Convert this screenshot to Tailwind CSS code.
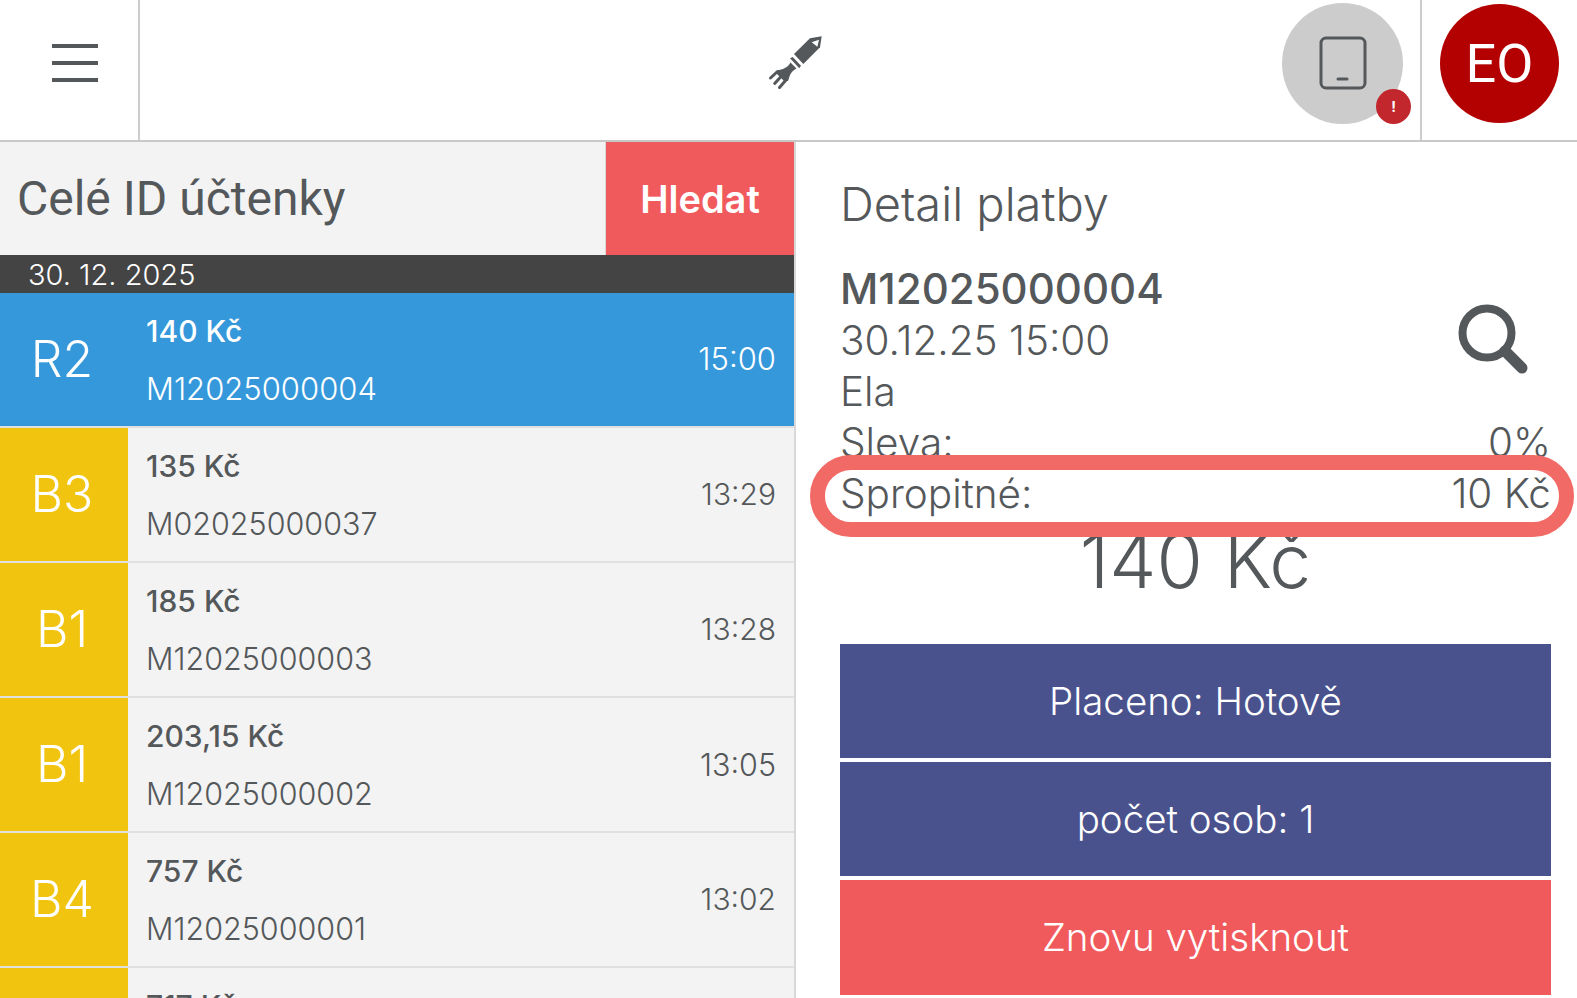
<!doctype html>
<html lang="cs">
  <head>
    <meta charset="UTF-8" />
    <title>Detail platby</title>
    <script src="https://cdn.jsdelivr.net/npm/@tailwindcss/browser@4"></script>
  </head>
  <body class="h-screen overflow-hidden bg-white text-[#54585a] font-['Inter',sans-serif]">
    <header class="flex h-[142px] items-stretch border-b-2 border-[#c8c8c8] bg-white">
      <div class="flex w-[140px] shrink-0 items-center justify-center border-r-2 border-[#cccccc] pl-[12px]">
        <div class="flex w-[46px] flex-col gap-[13px] -mt-[15px]">
          <span class="h-[4px] bg-[#54585a]"></span>
          <span class="h-[4px] bg-[#54585a]"></span>
          <span class="h-[4px] bg-[#54585a]"></span>
        </div>
      </div>
      <div class="flex w-[1125px] items-center justify-center pl-[187px]">
        <svg class="-mt-[15px]" width="56" height="56" viewBox="0 0 56 56" fill="#54585a" stroke-linecap="round">
          <path d="M26 19 L42 3.3 L53.7 1.3 L52 12.3 L35.3 29 Z" />
          <path d="M43.7 7.3 L51 4.7 L49.3 11.7 Z" fill="#fff" />
          <path d="M22 23.3 L24.7 22 L33 30.7 L31.3 33.3 Z" />
          <path d="M22.5 27.5 L28.5 33.5 Q24 35.5 22 40 L20 46 L16 46 L8 38 L9 35.5 L15 34 Q20 32 22.5 27.5 Z" />
          <path d="M9.5 36.5 L2.5 43 M13.5 41 L6.7 48.5 M18 45 L11.5 52.5" stroke="#54585a" stroke-width="3" fill="none" />
        </svg>
      </div>
      <div class="flex w-[157px] items-center justify-center border-r-2 border-[#cccccc]">
        <div class="relative flex h-[121px] w-[121px] -mt-[14px] items-center justify-center rounded-full bg-[#cccccc]">
          <svg width="48" height="54" viewBox="0 0 48 54" fill="none" stroke="#54585a" stroke-width="3">
            <rect x="2" y="2" width="44" height="50" rx="5" />
            <path d="M19 43 H28" stroke-width="3" stroke-linecap="round" />
          </svg>
          <span class="absolute right-[-8px] bottom-0 flex h-[35px] w-[35px] items-center justify-center rounded-full bg-[#c1272d] text-[14px] font-bold text-white">!</span>
        </div>
      </div>
      <div class="flex flex-1 items-center justify-center">
        <div class="flex h-[119px] w-[119px] -mt-[14px] items-center justify-center rounded-full bg-[#b30000] text-[54px] text-white font-['Roboto',sans-serif]">EO</div>
      </div>
    </header>

    <main class="flex">
      <section class="w-[796px] shrink-0 border-r-2 border-[#d8d8d8]">
        <div class="flex h-[113px] bg-[#f3f3f3]">
          <div class="flex flex-1 items-center pl-[17px] pt-[1px] text-[48px] font-['Roboto',sans-serif]">Celé ID účtenky</div>
          <div class="flex w-[189px] items-center justify-center border-l border-[#d8d8d8] bg-[#f15a5c] pt-[1px] text-[38px] font-semibold text-white">Hledat</div>
        </div>
        <div class="h-[38px] bg-[#444444] pl-[28px] pt-[1px] text-[29px] leading-[38px] font-light text-white">30. 12. 2025</div>

        <div class="flex h-[133px] bg-[#3598db] text-white">
          <div class="flex w-[124px] items-center justify-center text-[50px] font-[350]">R2</div>
          <div class="flex flex-1 flex-col pl-[22px] pt-[16px]">
            <span class="text-[30px] font-medium">140 Kč</span>
            <span class="mt-[12px] text-[31px] font-[350]">M12025000004</span>
          </div>
          <div class="flex items-center pr-[18px] text-[31px] font-[350]">15:00</div>
        </div>

        <div class="flex h-[135px] border-t-2 border-[#e0e0e0] bg-[#f3f3f3]">
          <div class="flex w-[128px] items-center justify-center bg-[#f1c40f] pr-[4px] text-[50px] font-[350] text-white">B3</div>
          <div class="flex flex-1 flex-col pl-[18px] pt-[16px]">
            <span class="text-[30px] font-medium">135 Kč</span>
            <span class="mt-[12px] text-[30.5px] font-[350]">M02025000037</span>
          </div>
          <div class="flex items-center pr-[18px] text-[30px] font-[350]">13:29</div>
        </div>

        <div class="flex h-[135px] border-t-2 border-[#e0e0e0] bg-[#f3f3f3]">
          <div class="flex w-[128px] items-center justify-center bg-[#f1c40f] pr-[4px] text-[50px] font-[350] text-white">B1</div>
          <div class="flex flex-1 flex-col pl-[18px] pt-[16px]">
            <span class="text-[30px] font-medium">185 Kč</span>
            <span class="mt-[12px] text-[30.5px] font-[350]">M12025000003</span>
          </div>
          <div class="flex items-center pr-[18px] text-[30px] font-[350]">13:28</div>
        </div>

        <div class="flex h-[135px] border-t-2 border-[#e0e0e0] bg-[#f3f3f3]">
          <div class="flex w-[128px] items-center justify-center bg-[#f1c40f] pr-[4px] text-[50px] font-[350] text-white">B1</div>
          <div class="flex flex-1 flex-col pl-[18px] pt-[16px]">
            <span class="text-[30px] font-medium">203,15 Kč</span>
            <span class="mt-[12px] text-[30.5px] font-[350]">M12025000002</span>
          </div>
          <div class="flex items-center pr-[18px] text-[30.5px] font-[350]">13:05</div>
        </div>

        <div class="flex h-[135px] border-t-2 border-[#e0e0e0] bg-[#f3f3f3]">
          <div class="flex w-[128px] items-center justify-center bg-[#f1c40f] pr-[4px] text-[50px] font-[350] text-white">B4</div>
          <div class="flex flex-1 flex-col pl-[18px] pt-[16px]">
            <span class="text-[30px] font-medium">757 Kč</span>
            <span class="mt-[12px] text-[30.5px] font-[350]">M12025000001</span>
          </div>
          <div class="flex items-center pr-[18px] text-[30px] font-[350]">13:02</div>
        </div>

        <div class="flex h-[135px] border-t-2 border-[#e0e0e0] bg-[#f3f3f3]">
          <div class="flex w-[128px] items-center justify-center bg-[#f1c40f]"></div>
          <div class="flex flex-1 flex-col pl-[18px] pt-[16px]">
            <span class="text-[30px] font-medium">717 Kč</span>
          </div>
        </div>
      </section>

      <section class="relative flex-1 pl-[44px] pr-[26px]">
        <h2 class="pt-[34px] text-[47px] leading-[56px] font-light">Detail platby</h2>
        <div class="relative mt-[32px] text-[40.5px] leading-[51px] font-light">
          <p class="-mt-[1px] text-[42px] font-medium">M12025000004</p>
          <p class="mt-[1px]">30.12.25 15:00</p>
          <p>Ela</p>
          <p class="flex justify-between"><span>Sleva:</span><span>0%</span></p>
          <p class="flex justify-between"><span>Spropitné:</span><span>10 Kč</span></p>
          <svg class="absolute right-[22px] top-[40px]" width="72" height="72" viewBox="0 0 72 72" fill="none" stroke="#54585a">
            <circle cx="30" cy="30" r="24.5" stroke-width="8" />
            <path d="M48 48 L65 65" stroke-width="11" stroke-linecap="round" />
          </svg>
        </div>
        <div class="text-center text-[75px] leading-[84px] font-[350]">140 Kč</div>
        <div class="mt-[41px] flex flex-col gap-[4px] text-[38.5px] font-light text-white">
          <div class="flex h-[114px] items-center justify-center bg-[#4a528e] pt-[2px]">Placeno: Hotově</div>
          <div class="flex h-[114px] items-center justify-center bg-[#4a528e] pt-[2px]">počet osob: 1</div>
          <div class="flex h-[115px] items-center justify-center bg-[#f15a5c]">Znovu vytisknout</div>
        </div>
        <div class="absolute left-[14px] right-[3px] top-[313px] h-[82px] rounded-[41px] border-[15px] border-[#f26a66]"></div>
      </section>
    </main>
  </body>
</html>
